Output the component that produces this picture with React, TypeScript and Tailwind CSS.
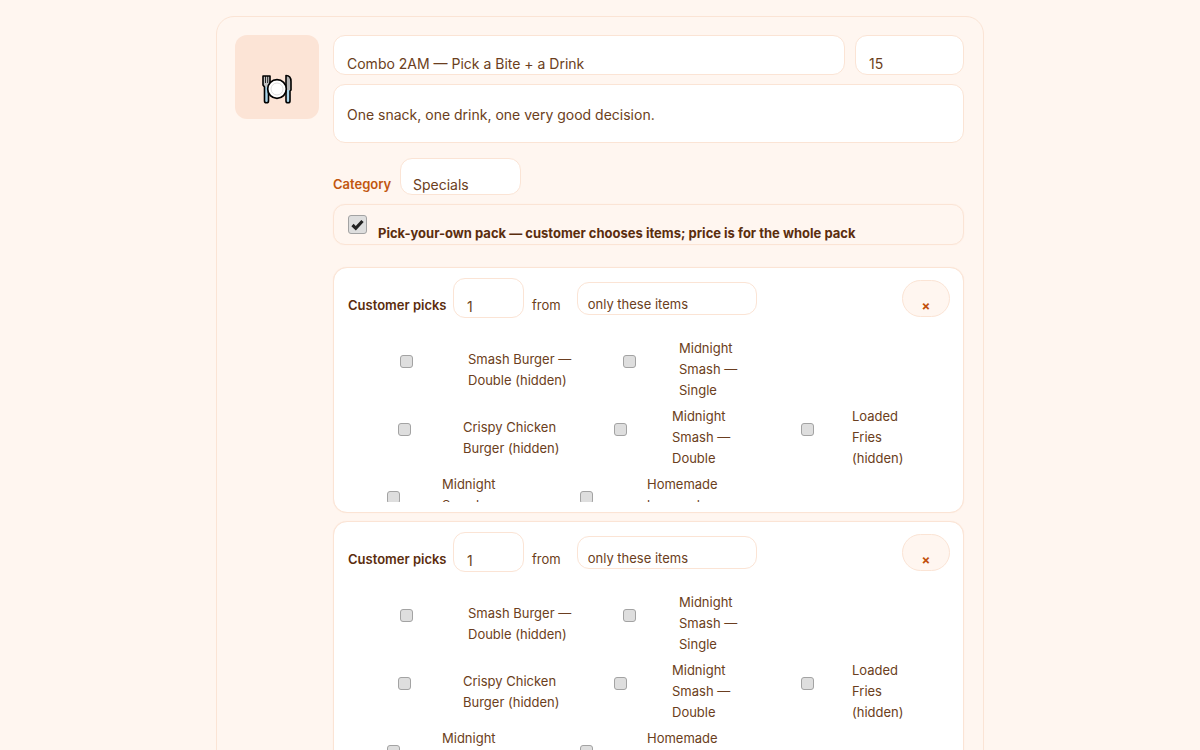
import { useState } from "react";

type Item = { name: string; box: string };
type Row = { columns: string; items: Item[] };

const rows: Row[] = [
  {
    columns: "grid-cols-[120px_115px_96px_68px]",
    items: [
      { name: "Smash Burger — Double (hidden)", box: "smash-double" },
      { name: "Midnight Smash — Single", box: "midnight-single" },
    ],
  },
  {
    columns: "grid-cols-[115px_109px_100px_94px_86px_64px]",
    items: [
      { name: "Crispy Chicken Burger (hidden)", box: "crispy-chicken" },
      { name: "Midnight Smash — Double", box: "midnight-double" },
      { name: "Loaded Fries (hidden)", box: "loaded-fries" },
    ],
  },
  {
    columns: "grid-cols-[94px_87px_118px_84px]",
    items: [
      { name: "Midnight Smash — Triple", box: "midnight-triple" },
      { name: "Homemade lemonade (hidden)", box: "lemonade" },
    ],
  },
];

const field = "border border-[#fbe4d5] bg-white outline-none";

const PlateIcon = () => (
  <svg viewBox="0 0 32 32" className="h-8 w-8" aria-hidden="true">
    <path d="M2 3h7v9l-1.5 2v15.5h-4V14L2 12z" fill="#a9d3e8" />
    <path d="M2 3h7v9l-1.5 2h-4L2 12z" fill="#c4c4c4" />
    <path d="M4.500 3v7M6.700 3v7" stroke="#222" strokeWidth="1" />
    <path d="M2 3h7v9l-1.500 2v14q0 1.800-2 1.800t-2-1.800V14L2 12z" fill="none" stroke="#000" strokeWidth="1.600" strokeLinejoin="round" />
    <path d="M25 16v12q0 1.800 2 1.800t2-1.800V16z" fill="#a9d3e8" />
    <path d="M25 2.500q5 0 5 6V17h-5z" fill="#b3b3b3" />
    <path d="M25 2.500q5 0 5 6V17l-1 1v10q0 1.800-2 1.800T25 28z" fill="none" stroke="#000" strokeWidth="1.600" strokeLinejoin="round" />
    <circle cx="16" cy="16" r="9.300" fill="#fff" stroke="#000" strokeWidth="1.700" />
    <circle cx="16" cy="16" r="6" fill="#fff" stroke="#dedede" strokeWidth="1" />
  </svg>
);

const PickGroup = ({ id }: { id: string }) => (
  <section className="rounded-[14px] border border-[#fbe4d5] bg-white py-[10px] pr-[13px] pl-[14px] shadow-[0_0_1px_#fbe4d5]">
    <div className="flex h-10 items-center">
      <label htmlFor={`${id}-count`} className="w-[105px] shrink-0 pt-[14px] text-[13px] leading-5 font-semibold text-[#5b2d0e]">
        Customer picks
      </label>
      <input id={`${id}-count`} defaultValue="1" className={`${field} h-10 w-[71px] rounded-xl px-[13px] pt-4 text-[14px]`} />
      <label htmlFor={`${id}-source`} className="ml-2 pt-[14px] text-[13px] leading-5">
        from
      </label>
      <select id={`${id}-source`} className={`${field} ml-4 h-[33px] w-[180px] appearance-none rounded-xl px-[10px] pt-3 text-[13px]`}>
        <option>only these items</option>
      </select>
      <button type="button" aria-label="Remove group" className="ml-auto flex h-[37px] w-12 items-center justify-center rounded-full border border-[#fbe4d5] bg-[#fff6f0] pt-[18px] text-[13px] font-bold text-[#c2500c]">
        ×
      </button>
    </div>

    <div className="mt-5 flex h-[164px] flex-col gap-[5px] overflow-hidden">
      {rows.map((row, index) => (
        <div key={index} className={`grid h-[63px] shrink-0 items-center ${row.columns}`}>
          {row.items.map((item) => (
            <div key={item.box} className="contents">
              <div className="flex justify-center pr-[3px] pb-4">
                <input
                  id={`${id}-${item.box}`}
                  type="checkbox"
                  className="h-[13px] w-[13px] appearance-none rounded-[3px] border border-[#a3a3a3] bg-[#dedede] checked:bg-[#555]"
                />
              </div>
              <label htmlFor={`${id}-${item.box}`} className="pr-1 text-[13px] leading-[21px]">
                {item.name}
              </label>
            </div>
          ))}
        </div>
      ))}
    </div>
  </section>
);

export default function App() {
  const [pack, setPack] = useState(true);

  return (
    <main className="min-h-screen bg-[#fff6f0] px-4 pt-4 font-['Inter',sans-serif] text-[#6b3e20]">
      <div className="mx-auto flex max-w-[768px] items-start gap-[14px] rounded-[18px] border border-[#fbe4d5] py-[18px] pr-[19px] pl-[18px]">
        <div className="flex h-[84px] w-[84px] shrink-0 items-center justify-center rounded-xl bg-[#fce4d6] pt-6">
          <PlateIcon />
        </div>

        <div className="min-w-0 flex-1">
          {/* Name and price */}
          <div className="flex gap-[10px]">
            <input aria-label="Name" defaultValue="Combo 2AM — Pick a Bite + a Drink" className={`${field} h-10 min-w-0 flex-1 rounded-xl px-[13px] pt-[17px] text-[14px]`} />
            <input aria-label="Price" defaultValue="15" className={`${field} h-10 w-[109px] rounded-xl px-[13px] pt-[17px] text-[14px]`} />
          </div>
          <textarea
            aria-label="Description"
            defaultValue="One snack, one drink, one very good decision."
            className={`${field} mt-[9px] block h-[59px] w-full resize-none rounded-xl px-[13px] pt-5 text-[14px] leading-5`}
          />

          <div className="mt-[15px] flex items-center">
            <label htmlFor="category" className="w-[67px] pt-[14px] text-[13px] leading-5 font-semibold text-[#c2560f]">
              Category
            </label>
            <select id="category" className={`${field} h-[37px] w-[121px] appearance-none rounded-xl px-3 pt-[15px] text-[14px]`}>
              <option>Specials</option>
            </select>
          </div>

          <label className="mt-[9px] flex h-[41px] items-center rounded-xl border border-[#fbe4d5] px-[14px] shadow-[0_0_1px_#fbe4d5]">
            <span className="grid">
              <input
                type="checkbox"
                checked={pack}
                onChange={() => setPack(!pack)}
                className="peer col-start-1 row-start-1 h-[19px] w-[19px] appearance-none rounded-[3px] border border-[#a3a3a3] bg-[#dedede]"
              />
              <svg viewBox="0 0 19 19" className="pointer-events-none invisible col-start-1 row-start-1 h-[19px] w-[19px] peer-checked:visible" aria-hidden="true">
                <path d="M4.500 10l3.300 3.300L14.500 6" fill="none" stroke="#222" strokeWidth="3.200" />
              </svg>
            </span>
            <span className="ml-[11px] pt-4 text-[13px] leading-5 font-bold text-[#5b2d0e]">
              Pick-your-own pack — customer chooses items; price is for the whole pack
            </span>
          </label>

          <div className="mt-[22px] flex flex-col gap-2">
            <PickGroup id="bite" />
            <PickGroup id="drink" />
          </div>
        </div>
      </div>
    </main>
  );
}
